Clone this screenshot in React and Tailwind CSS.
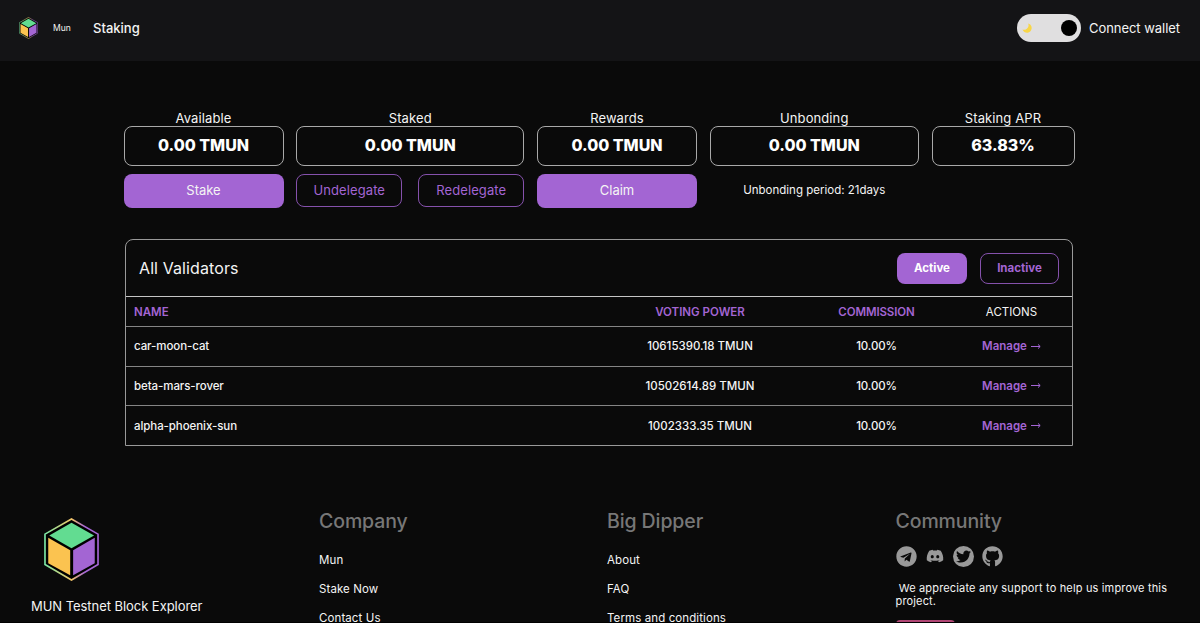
import React, { useState } from 'react';
import { FaDiscord, FaGithub, FaTelegram, FaTwitter } from 'react-icons/fa';

const validators = [
    { name: 'car-moon-cat', power: '10615390.18 TMUN', commission: '10.00%' },
    { name: 'beta-mars-rover', power: '10502614.89 TMUN', commission: '10.00%' },
    { name: 'alpha-phoenix-sun', power: '1002333.35 TMUN', commission: '10.00%' },
];

function CubeLogo({ className, id }) {
    return (
        <svg className={className} viewBox="71 38 168 192" aria-hidden="true">
            <defs>
                <linearGradient id={id} x1="0" x2="1" y1="0" y2="0">
                    <stop offset="0" stopColor="#7be8a6" />
                    <stop offset="0.5" stopColor="#f3c667" />
                    <stop offset="0.75" stopColor="#a666d6" />
                    <stop offset="1" stopColor="#a666d6" />
                </linearGradient>
            </defs>
            <polygon points="155,41 236,87 236,180 155,227 74,180 74,87" fill="#000" stroke={`url(#${id})`} strokeWidth="5" />
            <polygon points="155,52 224,91 155,130 87,91" fill="#62dc91" />
            <polygon points="84,98 151,136 151,213 84,176" fill="#fbc350" />
            <polygon points="160,136 226,98 226,176 160,213" fill="#a365d3" />
        </svg>
    );
}

function Stat({ label, value, children }) {
    return (
        <div className="flex flex-col">
            <div className="h-4 text-center text-[13px] leading-4 tracking-[0.1px]">{label}</div>
            <div className="flex h-10 items-center justify-center rounded-lg border border-[#a9a9a9] pb-0.5 text-base font-extrabold text-white">
                {value}
            </div>
            <div className="mt-2 flex">{children}</div>
        </div>
    );
}

function FooterColumn({ title, links }) {
    return (
        <div>
            <h2 className="text-[19.5px] leading-6 font-medium tracking-[-0.1px] text-[#777]">{title}</h2>
            <ul className="mt-5">
                {links.map(link => (
                    <li key={link} className="h-[29px] text-[11.5px] leading-[15px] tracking-[0.1px] whitespace-nowrap">
                        <a href="#">{link}</a>
                    </li>
                ))}
            </ul>
        </div>
    );
}

export default function App() {
    const [active, setActive] = useState(true);

    return (
        <div className="h-[623px] overflow-hidden border-b border-black bg-[#0a0a0a] font-['Inter',sans-serif] text-[#f4f4f4]">
            <header className="flex h-[61px] items-start bg-[#141416] pt-3.5 pr-5 pl-[19px]">
                <div className="flex h-7 items-center">
                    <CubeLogo id="nav-cube" className="h-[22px] w-[19px]" />
                    <span className="ml-[15px] w-10 text-[8.5px]">Mun</span>
                    <a href="#" className="pt-0.5 text-[13px] font-medium">Staking</a>
                </div>
                <div className="ml-auto flex h-7 items-center">
                    <button type="button" className="flex h-7 w-16 items-center justify-between rounded-full bg-[#e0dfe0] pr-1 pl-[5px]" aria-label="Toggle theme">
                        <svg className="size-[10px]" viewBox="0 0 10 10">
                            <path d="M6.1 .4A4.7 4.7 0 1 1 .5 6.5A4.5 4.5 0 0 0 6.1 .4Z" fill="#f8d648" />
                        </svg>
                        <span className="size-4 rounded-full bg-black" />
                    </button>
                    <a href="#" className="ml-2 pt-0.5 text-[13px] tracking-[-0.04px]">Connect wallet</a>
                </div>
            </header>

            <main className="ml-[123.5px] w-[951px] pt-[49px]">
                <section className="grid grid-cols-[160px_228px_160px_209px_143px] gap-x-[12.75px]">
                    <Stat label="Available" value="0.00 TMUN">
                        <button className="h-[34px] w-full rounded-lg bg-[#a365d3] text-[13px]">Stake</button>
                    </Stat>
                    <Stat label="Staked" value="0.00 TMUN">
                        <div className="flex w-full justify-between text-[13px] tracking-[0.1px] text-[#a365d3]">
                            <button className="h-[33px] w-[106px] rounded-lg border border-[#8551ac]">Undelegate</button>
                            <button className="h-[33px] w-[106px] rounded-lg border border-[#8551ac]">Redelegate</button>
                        </div>
                    </Stat>
                    <Stat label="Rewards" value="0.00 TMUN">
                        <button className="h-[34px] w-full rounded-lg bg-[#a365d3] text-[13px]">Claim</button>
                    </Stat>
                    <Stat label="Unbonding" value="0.00 TMUN">
                        <p className="w-full pt-2 text-center text-[11.5px] leading-4">Unbonding period: 21days</p>
                    </Stat>
                    <Stat label="Staking APR" value="63.83%" />
                </section>

                <section className="mt-[31px] ml-[1.5px] w-[948px] rounded-t-lg border border-[#999]">
                    <div className="flex h-14 items-center pr-[13px] pl-[13px]">
                        <h1 className="text-base font-normal tracking-[0.1px]">All Validators</h1>
                        <div className="ml-auto flex gap-[13px] text-[11.5px] font-bold">
                            <button
                                type="button"
                                onClick={() => setActive(true)}
                                className={active ? 'h-[31px] w-[70px] rounded-lg bg-[#a365d3] pt-0.5 text-white' : 'h-[31px] w-[70px] rounded-lg border border-[#8551ac] pt-0.5 text-[#a365d3]'}
                            >
                                Active
                            </button>
                            <button
                                type="button"
                                onClick={() => setActive(false)}
                                className={active ? 'h-[31px] w-[79px] rounded-lg border border-[#8551ac] pt-0.5 text-[#a365d3]' : 'h-[31px] w-[79px] rounded-lg bg-[#a365d3] pt-0.5 text-white'}
                            >
                                Inactive
                            </button>
                        </div>
                    </div>
                    <table className="w-full table-fixed text-[11.5px] leading-4">
                        <colgroup>
                            <col className="w-[474px]" />
                            <col className="w-[200px]" />
                            <col className="w-[151px]" />
                            <col />
                        </colgroup>
                        <thead>
                            <tr className="h-[30px] border-t border-[#c5c5c5] text-[#a365d3]">
                                <th className="pl-2 text-left font-semibold">NAME</th>
                                <th className="font-semibold">VOTING POWER</th>
                                <th className="pl-0.5 font-semibold tracking-[-0.1px]">COMMISSION</th>
                                <th className="font-normal text-[#f4f4f4]">ACTIONS</th>
                            </tr>
                        </thead>
                        <tbody>
                            {validators.map(v => (
                                <tr key={v.name} className="h-[39.6px] border-t border-[#858585] text-center font-medium">
                                    <td className="pl-2 text-left tracking-[-0.08px]">{v.name}</td>
                                    <td>{v.power}</td>
                                    <td className="pl-0.5 tracking-[-0.1px]">{v.commission}</td>
                                    <td className="font-semibold text-[#a365d3]">
                                        <a href="#" className="inline-flex items-center gap-1">
                                            Manage
                                            <svg className="h-[7px] w-[10px]" viewBox="0 0 10 7" fill="none" stroke="currentColor" aria-hidden="true">
                                                <path d="M0 3.5H9M7 1.4L9.2 3.5L7 5.6" />
                                            </svg>
                                        </a>
                                    </td>
                                </tr>
                            ))}
                        </tbody>
                    </table>
                </section>
            </main>

            <footer className="grid grid-cols-[288px_288px_288.5px_1fr] pt-[63px] pl-[31px]">
                <div className="pt-[9px]">
                    <CubeLogo id="footer-cube" className="ml-[13px] h-[63px] w-[55px]" />
                    <p className="mt-[17px] text-[13px] leading-4 tracking-[-0.05px]">MUN Testnet Block Explorer</p>
                </div>
                <FooterColumn title="Company" links={['Mun', 'Stake Now', 'Contact Us']} />
                <FooterColumn title="Big Dipper" links={['About', 'FAQ', 'Terms and conditions']} />
                <div>
                    <h2 className="text-[19.5px] leading-6 font-medium tracking-[-0.1px] text-[#777]">Community</h2>
                    <div className="mt-3 flex h-[22px] items-center text-[#999]">
                        <FaTelegram className="size-[21px]" />
                        <FaDiscord className="ml-[9px] size-[18px]" />
                        <span className="ml-[9px] flex size-[21px] items-center justify-center rounded-full bg-[#999] text-[#0a0a0a]">
                            <FaTwitter className="size-[15px]" />
                        </span>
                        <FaGithub className="ml-2 size-[21px]" />
                    </div>
                    <p className="mt-[15px] w-[285px] text-[11px] leading-[13px] tracking-[0.16px]">
                        &nbsp;We appreciate any support to help us improve this project.
                    </p>
                    <button className="mt-3 h-8 w-[59px] rounded bg-[#b14674]" aria-label="Donate" />
                </div>
            </footer>
        </div>
    );
}
